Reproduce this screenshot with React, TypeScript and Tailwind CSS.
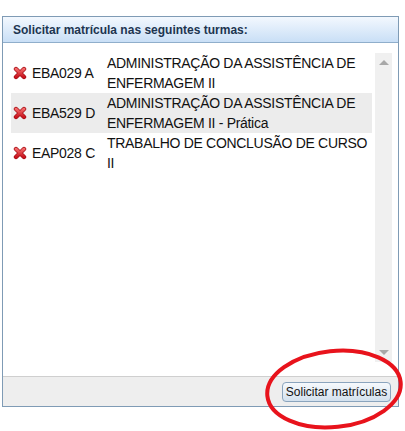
import React from 'react';

const turmas = [
  { code: 'EBA029 A', name: 'ADMINISTRAÇÃO DA ASSISTÊNCIA DE ENFERMAGEM II', highlight: false },
  { code: 'EBA529 D', name: 'ADMINISTRAÇÃO DA ASSISTÊNCIA DE ENFERMAGEM II - Prática', highlight: true },
  { code: 'EAP028 C', name: 'TRABALHO DE CONCLUSÃO DE CURSO II', highlight: false },
];

const RemoveIcon = () => (
  <svg width="14" height="14" viewBox="0 0 14 14">
    <defs>
      <linearGradient id="rx" x1="0" y1="0" x2="0" y2="1">
        <stop offset="0" stopColor="#f46a6a" />
        <stop offset="1" stopColor="#c8141e" />
      </linearGradient>
    </defs>
    <path d="M3 3 L11 11 M11 3 L3 11" stroke="#a50d14" strokeWidth="4.4" strokeLinecap="round" />
    <path d="M3 3 L11 11 M11 3 L3 11" stroke="url(#rx)" strokeWidth="3" strokeLinecap="round" />
  </svg>
);

export default function App() {
  return (
    <div className="relative w-[405px] h-[431px] bg-white pt-[16px] pl-[2px] font-['Liberation_Sans',Arial,sans-serif]">
      <div className="w-[397px] border border-[#7f9bb5]">
        <div className="h-[26px] flex items-center pl-[10px] border-b border-[#8faecb] bg-gradient-to-b from-[#f3f8fe] to-[#c9dff6] text-[12px] font-bold text-[#1d3550]">
          Solicitar matrícula nas seguintes turmas:
        </div>
        <div className="h-[333px] flex pl-[8px] pt-[10px]">
          <div className="w-[361px] text-[14px] tracking-[-0.3px] leading-[20px] text-[#111]">
            {turmas.map((t) => (
              <div key={t.code} className={`flex items-center h-[40px] ${t.highlight ? 'bg-[#ececec]' : ''}`}>
                <div className="w-[21px] pl-[2px] flex items-center">
                  <RemoveIcon />
                </div>
                <div className="w-[75px]">{t.code}</div>
                <div className="w-[262px] self-start">{t.name}</div>
              </div>
            ))}
          </div>
          <div className="ml-[3px] w-[17px] h-[309px] bg-[#f0f0f0] flex flex-col items-center justify-between py-[7px]">
            <div className="w-0 h-0 border-l-[5px] border-r-[5px] border-b-[5px] border-l-transparent border-r-transparent border-b-[#a8a8a8]" />
            <div className="w-0 h-0 border-l-[5px] border-r-[5px] border-t-[5px] border-l-transparent border-r-transparent border-t-[#a8a8a8]" />
          </div>
        </div>
        <div className="h-[30px] bg-[#eeeeee] border-t border-[#cfcfcf] flex items-center justify-end pr-[7px]">
          <button className="h-[20px] w-[109px] rounded-[4px] border border-[#8aa4bd] bg-gradient-to-b from-[#f6f9fc] to-[#d3e1ee] text-[12px] text-[#111] leading-none">
            Solicitar matrículas
          </button>
        </div>
      </div>
      <svg className="absolute left-0 top-0 pointer-events-none" width="405" height="431">
        <ellipse cx="334" cy="389" rx="67" ry="38" fill="none" stroke="#e8131c" strokeWidth="4" transform="rotate(-6 334 389)" />
      </svg>
    </div>
  );
}
